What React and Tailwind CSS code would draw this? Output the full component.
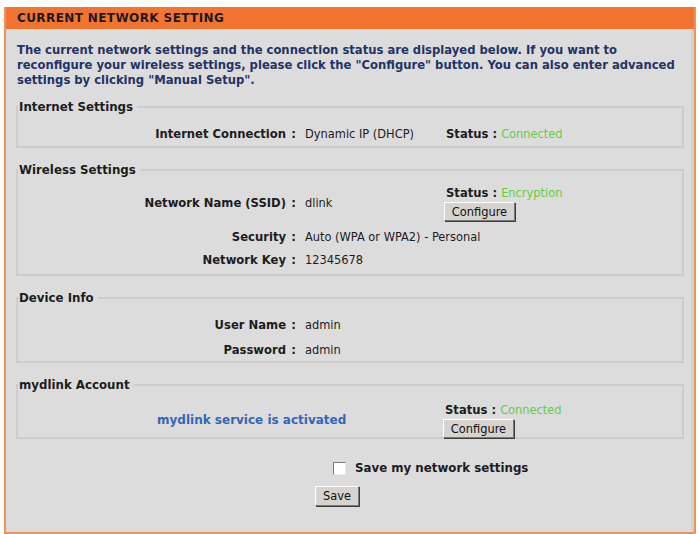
import React from "react";

const bold = { fontFamily: '"DejaVu Sans", Verdana, sans-serif' };
const thin = "font-['DejaVu_Sans_Condensed','DejaVu_Sans',sans-serif]";

const Row = ({ label, value, children, className = "" }) => (
  <div className={"flex items-center " + className}>
    <div className="w-[268px] text-right font-bold text-[11.6px] leading-[16px] text-[#1c1c1c]">{label}</div>
    <div className="w-[15px] text-center font-bold text-[11.8px] leading-[16px] text-[#1c1c1c]">:</div>
    <div className={"w-[145px] pl-[4px] whitespace-nowrap text-[12.7px] leading-[16px] text-[#1c1c1c] " + thin}>
      {value}
    </div>
    {children}
  </div>
);

const Status = ({ text }) => (
  <div className="leading-[16px] whitespace-nowrap">
    <span className="font-bold text-[11.6px] text-[#1c1c1c]">Status : </span>
    <span className={"text-[12.7px] text-[#66cc44] " + thin}>{text}</span>
  </div>
);

const WinButton = ({ children, className = "" }) => (
  <button
    className={
      "flex items-center justify-center bg-[#d6d3ce] border border-t-[#ffffff] border-l-[#ffffff] border-r-[#7a7a7a] border-b-[#7a7a7a] shadow-[1px_1px_0_#3c3c3c] text-[12.7px] leading-[16px] text-[#111] " +
      thin +
      " " +
      className
    }
  >
    {children}
  </button>
);

const Box = ({ title, children, className = "" }) => (
  <fieldset className={"mx-[10px] border-2 border-[#cdcdcd] " + className}>
    <legend className="pl-[1px] pr-[4px] font-bold text-[11.8px] leading-[16px] text-[#1c1c1c]">{title}</legend>
    {children}
  </fieldset>
);

export default function App() {
  return (
    <div className="w-[699px] h-[534px] bg-white pt-[7px] pl-[4px] pr-[3px]" style={bold}>
      <div className="h-[527px] border-2 border-t-0 border-[#ef915a] bg-[#dcdcdc] shadow-[inset_-3px_0_0_#cad2da]">
        <div className="h-[22px] bg-[#f37431] pl-[11px] flex items-center font-bold text-[12px] tracking-[0.4px] text-[#1a1a1a]">
          CURRENT NETWORK SETTING
        </div>
        <p className="mt-[14px] pl-[11px] whitespace-nowrap font-bold text-[11.6px] leading-[15px] text-[#223366]">
          The current network settings and the connection status are displayed below. If you want to
          <br />
          reconfigure your wireless settings, please click the "Configure" button. You can also enter advanced
          <br />
          settings by clicking "Manual Setup".
        </p>

        <Box title="Internet Settings" className="mt-[11px] h-[49px]">
          <Row label="Internet Connection" value="Dynamic IP (DHCP)" className="mt-[10px]">
            <Status text="Connected" />
          </Row>
        </Box>

        <Box title="Wireless Settings" className="mt-[14px] h-[114px]">
          <Row label="Network Name (SSID)" value="dlink" className="mt-[6px]">
            <div className="flex flex-col items-start">
              <Status text="Encryption" />
              <WinButton className="mt-[1px] -ml-[2px] w-[71px] h-[19px]">Configure</WinButton>
            </div>
          </Row>
          <Row label="Security" value="Auto (WPA or WPA2) - Personal" className="mt-[8px]" />
          <Row label="Network Key" value="12345678" className="mt-[7px]" />
        </Box>

        <Box title="Device Info" className="mt-[14px] h-[73px]">
          <Row label="User Name" value="admin" className="mt-[11px]" />
          <Row label="Password" value="admin" className="mt-[9px]" />
        </Box>

        <Box title="mydlink Account" className="mt-[14px] h-[62px]">
          <div className="flex items-center mt-[8px]">
            <div className="w-[427px] pl-[139px] font-bold text-[12px] leading-[16px] text-[#3366bb] whitespace-nowrap">
              mydlink service is activated
            </div>
            <div className="flex flex-col items-start">
              <Status text="Connected" />
              <WinButton className="mt-[1px] -ml-[2px] w-[71px] h-[19px]">Configure</WinButton>
            </div>
          </div>
        </Box>

        <div className="mt-[21px] pl-[327px] flex items-center gap-[9px] h-[16px]">
          <span className="w-[13px] h-[13px] bg-white border border-t-[#7a7a7a] border-l-[#7a7a7a] border-r-[#e8e8e8] border-b-[#e8e8e8]" />
          <span className="font-bold text-[11.8px] leading-[16px] text-[#1c1c1c]">Save my network settings</span>
        </div>
        <div className="mt-[10px] pl-[309px]">
          <WinButton className="w-[44px] h-[20px]">Save</WinButton>
        </div>
      </div>
    </div>
  );
}
